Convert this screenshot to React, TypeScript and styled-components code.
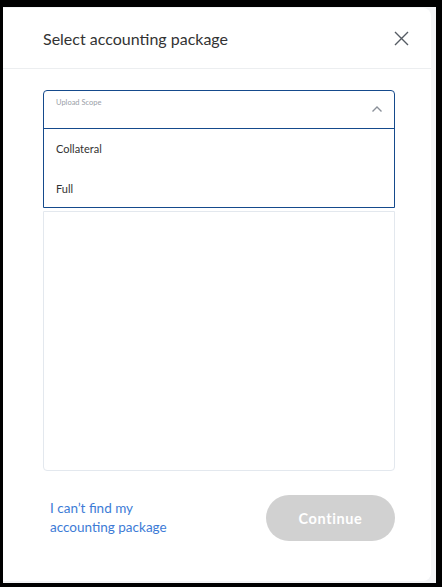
import React from "react";
import styled, { createGlobalStyle } from "styled-components";

const Global = createGlobalStyle`
  html, body { margin: 0; padding: 0; background: #000; }
  body { font-family: Lato, "Open Sans", sans-serif; }
  * { box-sizing: border-box; }
`;

const Frame = styled.div`
  margin: 7px 0 0 3px;
  width: 433px;
  height: 576px;
  background: #f3f4f6;
  padding: 1px 5px 2px 0;
  display: flex;
`;

const Card = styled.div`
  flex: 1;
  background: #fff;
  border-radius: 0 8px 8px 0;
  display: flex;
  flex-direction: column;
`;

const Header = styled.div`
  height: 61px;
  border-bottom: 1px solid #eceef0;
  display: flex;
  align-items: center;
  justify-content: space-between;
  padding: 0 21px 0 40px;
`;

const Title = styled.h1`
  margin: 0;
  font-size: 16px;
  font-weight: 400;
  color: #333;
  padding-top: 1px;
`;

const CloseBtn = styled.button`
  border: 0;
  background: none;
  padding: 0;
  width: 18px;
  height: 18px;
  display: flex;
  align-items: center;
  justify-content: center;
  cursor: pointer;
`;

const Body = styled.div`
  padding: 21px 36px 0 40px;
  display: flex;
  flex-direction: column;
`;

const SelectWrap = styled.div`
  display: flex;
  flex-direction: column;
  border: 1px solid #154a8c;
  border-radius: 4px 4px 0 0;
`;

const Trigger = styled.div`
  height: 38px;
  position: relative;
  padding: 7px 12px;
  border-bottom: 1px solid #154a8c;
`;

const FloatLabel = styled.span`
  display: block;
  font-size: 7.5px;
  color: #9aa0a8;
`;

const Chevron = styled.span`
  position: absolute;
  right: 11px;
  top: 14px;
  display: flex;
`;

const Menu = styled.ul`
  list-style: none;
  margin: 0;
  padding: 0;
`;

const Option = styled.li<{ $first?: boolean }>`
  height: 39px;
  padding: ${(p) => (p.$first ? "0 12px 1px" : "1px 12px 0")};
  display: flex;
  align-items: center;
  font-size: 11px;
  color: #333;
`;

const ListBox = styled.div`
  margin-top: 3px;
  height: 260px;
  border: 1px solid #e3e8ee;
  border-radius: 0 0 4px 4px;
`;

const Footer = styled.div`
  display: flex;
  align-items: center;
  justify-content: space-between;
  padding: 24px 36px 0 47px;
`;

const Link = styled.a`
  font-size: 13.5px;
  line-height: 19px;
  color: #3d7bd6;
  text-decoration: none;
  cursor: pointer;
`;

const ContinueBtn = styled.button`
  width: 129px;
  height: 46px;
  border: 0;
  border-radius: 23px;
  background: #d1d1d1;
  color: #fff;
  font-family: inherit;
  font-size: 14.5px;
  font-weight: 700;
  letter-spacing: 0.6px;
`;

export default function App() {
  return (
    <>
      <Global />
      <Frame>
        <Card>
          <Header>
            <Title>Select accounting package</Title>
            <CloseBtn aria-label="Close">
              <svg width="15" height="15" viewBox="0 0 15 15">
                <path d="M1 1 L14 14 M14 1 L1 14" stroke="#555b63" strokeWidth="1.4" fill="none" />
              </svg>
            </CloseBtn>
          </Header>
          <Body>
            <SelectWrap>
              <Trigger>
                <FloatLabel>Upload Scope</FloatLabel>
                <Chevron>
                  <svg width="12" height="8" viewBox="0 0 12 8">
                    <path d="M1.5 6.5 L6 2 L10.5 6.5" stroke="#8a9099" strokeWidth="1.4" fill="none" />
                  </svg>
                </Chevron>
              </Trigger>
              <Menu>
                <Option $first>Collateral</Option>
                <Option>Full</Option>
              </Menu>
            </SelectWrap>
            <ListBox />
          </Body>
          <Footer>
            <Link>
              I can’t find my
              <br />
              accounting package
            </Link>
            <ContinueBtn disabled>Continue</ContinueBtn>
          </Footer>
        </Card>
      </Frame>
    </>
  );
}
